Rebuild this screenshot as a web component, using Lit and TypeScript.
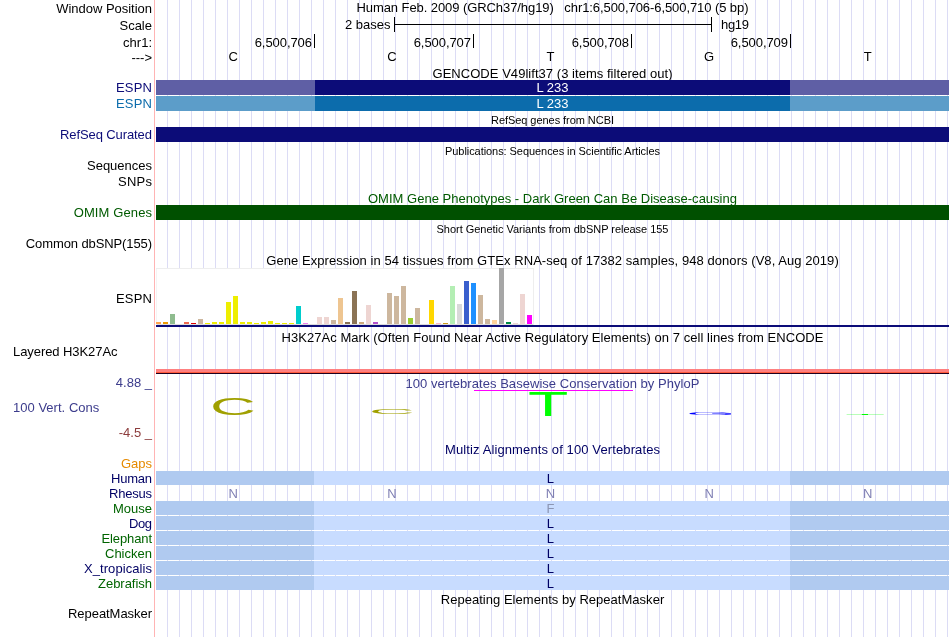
import { LitElement, html, svg, css, nothing, TemplateResult } from "lit";
import { customElement } from "lit/decorators.js";
import { styleMap } from "lit/directives/style-map.js";

const NAVY = "#0c0c78";
const BLUE = "#0c6cac";
const GREEN = "#005000";
const DEEP = "#000064";
const LEAF = "#006400";

/** GTEx expression bars: [height in px, colour]; a height of 0 is an empty slot. */
const TISSUES: [number, string][] = [
  [2, "#ffa54f"], [2, "#ee9a00"], [10, "#8fbc8f"], [0, "#8b1c62"], [2, "#ee6a50"], [1, "#dd0000"],
  [5, "#cdb79e"], [1, "#eeee00"], [2, "#eeee00"], [2, "#eeee00"], [22, "#eeee00"], [28, "#eeee00"],
  [2, "#eeee00"], [2, "#eeee00"], [1, "#eeee00"], [2, "#eeee00"], [3, "#eeee00"], [1, "#eeee00"],
  [1, "#eeee00"], [1, "#eeee00"], [18, "#00cdcd"], [1, "#ee82ee"], [0, "#9ac0cd"], [7, "#eed5d2"],
  [7, "#eed5d2"], [4, "#cdb79e"], [26, "#eec591"], [2, "#8b7355"], [33, "#8b7355"], [2, "#cdaa7d"],
  [19, "#eed5d2"], [2, "#b452cd"], [0, "#7a378b"], [31, "#cdb79e"], [28, "#cdb79e"], [38, "#cdb79e"],
  [6, "#9acd32"], [16, "#cdb79e"], [0, "#7a67ee"], [24, "#ffd700"], [1, "#ffb6c1"], [1, "#cd9b1d"],
  [38, "#b4eeb4"], [20, "#d9d9d9"], [43, "#3a5fcd"], [41, "#1e90ff"], [29, "#cdb79e"], [5, "#cdb79e"],
  [4, "#ffd39b"], [56, "#a6a6a6"], [2, "#008b45"], [1, "#eed5d2"], [30, "#eed5d2"], [9, "#ff00ff"],
];

/** Conservation logo: letter, colour, origin, baseline and stretch. */
const LOGO: [string, string, number, number, number, number][] = [
  ["C", "#a0a000", 54, 23.7, 6.35, 2.35],
  ["C", "#a0a000", 213, 23.4, 6.35, 0.8],
  ["T", "#00ff00", 372, 25, 6.6, 3.5],
  ["G", "#0000ff", 530, 23.7, 6.4, 0.36],
  ["T", "#00ff00", 689, 24, 6.6, 0.25],
];

const SPECIES: [string, string, string, number][] = [
  ["Human", DEEP, "L", 41],
  ["Rhesus", DEEP, "N", 43],
  ["Mouse", LEAF, "F", 39],
  ["Dog", DEEP, "L", 23],
  ["Elephant", LEAF, "L", 50.5],
  ["Chicken", LEAF, "L", 47],
  ["X_tropicalis", DEEP, "L", 68],
  ["Zebrafish", LEAF, "L", 54],
];

@customElement("app-root")
export class AppRoot extends LitElement {
  static styles = css`
    :host {
      display: block;
      width: 950px;
      height: 637px;
      overflow: hidden;
      font: 13px/15px "Liberation Sans", Arial, sans-serif;
      color: #000;
      will-change: opacity;
      background-image: linear-gradient(#ffb4b4, #ffb4b4),
        repeating-linear-gradient(to right, #dcdcf5 0 1px, transparent 1px 12px);
      background-size: 1px 100%, 782px 100%;
      background-position: 154px 0, 167px 0;
      background-repeat: no-repeat;
    }
    .row {
      display: grid;
      grid-template-columns: 152px 793px;
      column-gap: 4px;
      align-items: start;
    }
    .label { text-align: right; }
    .left { text-align: left; padding-left: 13px; }
    .d1 { padding-top: 1px; }
    .d2 { padding-top: 2px; }
    .d3 { padding-top: 3px; }
    .d23 { padding-top: 23px; }
    .d25 { padding-top: 25px; }
    .title { display: flex; justify-content: center; }
    .small { font-size: 11px; line-height: 12px; }
    .fit { display: inline-block; white-space: pre; vertical-align: top; }
    .scale { display: flex; }
    .scale .from { width: 234.5px; text-align: right; }
    .ruler {
      box-sizing: border-box;
      width: 318px;
      height: 15px;
      margin: 0 9px 0 3.5px;
      border: solid #000;
      border-width: 0 1px;
      background: linear-gradient(#000, #000) 0 7px / 100% 1px no-repeat;
    }
    .ticks { display: grid; grid-template-columns: 159px 159px 158px 159px; }
    .tick {
      box-sizing: border-box;
      height: 14px;
      padding: 1px 2px 0 0;
      border-right: 1px solid #000;
      text-align: right;
    }
    .bases { display: grid; grid-template-columns: repeat(5, 158.6px); }
    .bases span { text-align: center; padding-right: 4px; }
    .band { height: 15px; }
    .exon {
      display: grid;
      grid-template-columns: 159px 475px 159px;
      height: 15px;
      color: #fff;
      text-align: center;
    }
    .chart {
      box-sizing: border-box;
      display: flex;
      align-items: flex-end;
      gap: 2px;
      width: 378px;
      height: 57px;
      padding-bottom: 1px;
      background: #fff;
      box-shadow: inset 0 1px #eee, inset 1px 0 #f4f4f4, inset -1px 0 #eee, inset 0 -1px #ddd;
    }
    .bar { width: 5px; }
    .base { height: 2px; background: #0c0c78; }
    .mark {
      height: 3px;
      background: #ff8080;
      border-bottom: 1px solid #ff5a3c;
      box-shadow: 0 1px #200020;
    }
    .range { display: grid; row-gap: 10px; }
    .clip { width: 159px; height: 1px; margin: -1px 0 0 318px; background: #ff00ff; }
    .logo { display: block; overflow: visible; font-size: 10px; }
    .aln {
      height: 14px;
      color: #000064;
      background: linear-gradient(to right, #b0caf0 158px, #c8dcff 158px 634px, #b0caf0 634px);
    }
    .faint { color: #8080b4; }
    .grey { color: #8c96b4; }
  `;

  /** Spreads the letters of each text that names a width so that it fills that width. */
  protected updated() {
    this.renderRoot.querySelectorAll<HTMLElement>("[data-w]").forEach((el) => {
      const gap = (Number(el.dataset.w) - el.getBoundingClientRect().width) / (el.textContent!.length - 1);
      el.style.letterSpacing = `${gap.toFixed(4)}px`;
      el.style.marginRight = `${(-gap).toFixed(4)}px`;
    });
  }

  private fit(text: string, w: number) {
    return w ? html`<span class="fit" data-w=${w}>${text}</span>` : html`${text}`;
  }

  private row(h: number, label: TemplateResult | typeof nothing, body: TemplateResult | typeof nothing) {
    return html`<div class="row" style=${styleMap({ height: `${h}px` })}><div>${label}</div><div>${body}</div></div>`;
  }

  private label(text: string, color = "#000", cls = "", w = 0) {
    return html`<div class="label ${cls}" style=${styleMap({ color })}>${this.fit(text, w)}</div>`;
  }

  private title(text: string, w: number, cls = "", color = "#000") {
    return html`<div class="title ${cls}" style=${styleMap({ color })}>${this.fit(text, w)}</div>`;
  }

  private band(background: string) {
    return html`<div class="band" style=${styleMap({ background })}></div>`;
  }

  private exon(side: string, mid: string) {
    return html`<div class="exon">
      <div style=${styleMap({ background: side })}></div>
      <div style=${styleMap({ background: mid })}>${this.fit("L 233", 32)}</div>
      <div style=${styleMap({ background: side })}></div>
    </div>`;
  }

  private bases(letters: string[]) {
    return html`<div class="bases">${letters.map((l) => html`<span>${l}</span>`)}</div>`;
  }

  private species([name, color, aa, w]: (typeof SPECIES)[number]) {
    const cls = aa === "N" ? "faint" : aa === "F" ? "aln grey" : "aln";
    const letters = aa === "N" ? ["N", "N", "N", "N", "N"] : ["", "", aa, "", ""];
    return this.row(15, this.label(name, color, "", w), html`<div class=${cls}>${this.bases(letters)}</div>`);
  }

  /** Letters of the conservation track, stretched to their scores. */
  private logo() {
    return html`<svg class="logo" width="793" height="44">${LOGO.map(([ch, fill, x, y, sx, sy]) =>
      svg`<text fill=${fill} transform="translate(${x} ${y}) scale(${sx} ${sy})">${ch}</text>`)}</svg>`;
  }

  render() {
    return html`
      ${this.row(17, this.label("Window Position", "#000", "d1", 95.8), this.title("Human Feb. 2009 (GRCh37/hg19)   chr1:6,500,706-6,500,710 (5 bp)", 392))}
      ${this.row(17, this.label("Scale", "#000", "d1"), html`<div class="scale">
        <span class="from">${this.fit("2 bases", 45.5)}</span><span class="ruler"></span><span>${this.fit("hg19", 28)}</span>
      </div>`)}
      ${this.row(15, this.label("chr1:", "#000", "d1"), html`<div class="ticks">
        ${[706, 707, 708, 709].map((n) => html`<div class="tick">${this.fit(`6,500,${n}`, 57.3)}</div>`)}
      </div>`)}
      ${this.row(17, this.label("--->", "#000", "d1"), this.bases(["C", "C", "T", "G", "T"]))}
      ${this.row(14, nothing, this.title("GENCODE V49lift37 (3 items filtered out)", 240))}
      ${this.row(16, this.label("ESPN", NAVY, "", 36), this.exon("#5f5fa5", NAVY))}
      ${this.row(16, this.label("ESPN", BLUE, "", 36), this.exon("#5c9dc9", BLUE))}
      ${this.row(15, nothing, this.title("RefSeq genes from NCBI", 123, "small d2"))}
      ${this.row(15, this.label("RefSeq Curated", NAVY, "", 92), this.band(NAVY))}
      ${this.row(16, nothing, this.title("Publications: Sequences in Scientific Articles", 215, "small d3"))}
      ${this.row(16, this.label("Sequences", "#000", "", 65), nothing)}
      ${this.row(16, this.label("SNPs", "#000", "", 34), nothing)}
      ${this.row(15, nothing, this.title("OMIM Gene Phenotypes - Dark Green Can Be Disease-causing", 369, "d1", "#005a00"))}
      ${this.row(15, this.label("OMIM Genes", "#005a00", "", 78.3), this.band(GREEN))}
      ${this.row(16, nothing, this.title("Short Genetic Variants from dbSNP release 155", 232, "small d3"))}
      ${this.row(17, this.label("Common dbSNP(155)", "#000", "", 126.2), nothing)}
      ${this.row(15, nothing, this.title("Gene Expression in 54 tissues from GTEx RNA-seq of 17382 samples, 948 donors (V8, Aug 2019)", 572.5))}
      ${this.row(59, this.label("ESPN", "#000", "d23", 36), html`
        <div class="chart">${TISSUES.map(
          ([h, c]) => html`<div class="bar" style=${styleMap({ height: `${h}px`, background: c })}></div>`)}</div>
        <div class="base"></div>`)}
      ${this.row(17, nothing, this.title("H3K27Ac Mark (Often Found Near Active Regulatory Elements) on 7 cell lines from ENCODE", 542, "d3"))}
      ${this.row(30, this.label("Layered H3K27Ac", "#000", "left", 104.5), html`<div class="d25"><div class="mark"></div></div>`)}
      ${this.row(68, html`<div class="range d1">
          ${this.label("4.88 _", "#3c3c8c")}${this.label("100 Vert. Cons", "#3c3c8c", "left", 86.3)}${this.label("-4.5 _", "#8c3c3c")}
        </div>`,
        html`${this.title("100 vertebrates Basewise Conservation by PhyloP", 294, "d2", "#3c3c8c")}
          <div class="clip"></div>${this.logo()}`)}
      ${this.row(14, nothing, this.title("Multiz Alignments of 100 Vertebrates", 215, "", DEEP))}
      ${this.row(15, this.label("Gaps", "#e68a00", "", 31), nothing)}
      ${SPECIES.map((s) => this.species(s))}
      ${this.row(15, nothing, this.title("Repeating Elements by RepeatMasker", 223.5, "d1"))}
      ${this.row(16, this.label("RepeatMasker", "#000", "", 84), nothing)}
    `;
  }
}
